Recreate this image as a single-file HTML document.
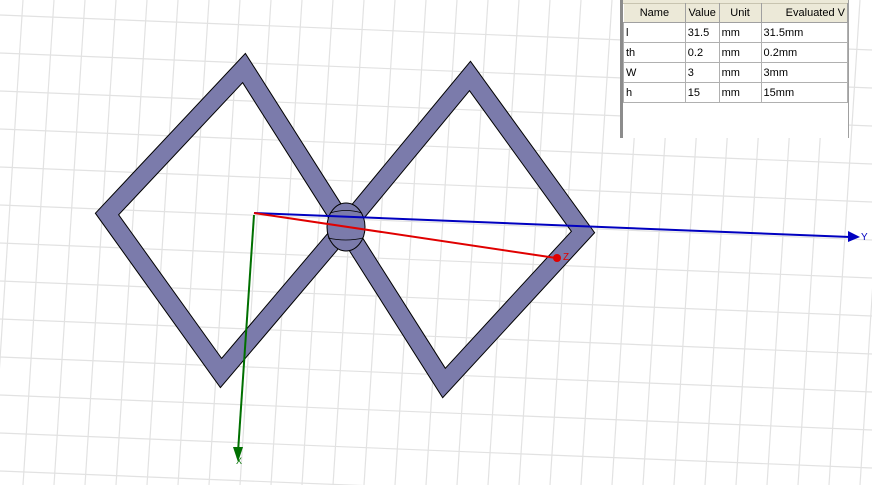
<!DOCTYPE html>
<html><head><meta charset="utf-8"><style>
html,body{margin:0;padding:0;background:#fff;width:872px;height:485px;overflow:hidden;font-family:"Liberation Sans",sans-serif}
#tbl{position:absolute;left:620px;top:0;width:229px;height:138px;background:#fff;border-left:3px solid #8c8c8c;border-right:1px solid #a0a0a0;box-sizing:border-box}
#tbl .top{position:absolute;left:0;top:0;width:100%;height:3px;background:#ece9d8}
table{position:absolute;left:0;top:3px;border-collapse:collapse;font-size:11px;color:#000}
td,th{height:19px;padding:0 2px;border:1px solid #b0b0b0;white-space:nowrap;overflow:hidden;font-weight:normal}
th{background:#ece9d8;height:18px;border-color:#c8c4b0 #a0a0a0 #a0a0a0 #fff}
</style></head><body>
<svg width="872" height="485" style="position:absolute;left:0;top:0">
<g stroke="#e2e2e2" stroke-width="1.2">
<line x1="23" y1="0" x2="-8" y2="485"/><line x1="54" y1="0" x2="23" y2="485"/><line x1="85" y1="0" x2="54" y2="485"/><line x1="116" y1="0" x2="85" y2="485"/><line x1="147" y1="0" x2="116" y2="485"/><line x1="178" y1="0" x2="147" y2="485"/><line x1="209" y1="0" x2="178" y2="485"/><line x1="240" y1="0" x2="209" y2="485"/><line x1="271" y1="0" x2="240" y2="485"/><line x1="302" y1="0" x2="271" y2="485"/><line x1="333" y1="0" x2="302" y2="485"/><line x1="364" y1="0" x2="333" y2="485"/><line x1="395" y1="0" x2="364" y2="485"/><line x1="426" y1="0" x2="395" y2="485"/><line x1="457" y1="0" x2="426" y2="485"/><line x1="488" y1="0" x2="457" y2="485"/><line x1="519" y1="0" x2="488" y2="485"/><line x1="550" y1="0" x2="519" y2="485"/><line x1="581" y1="0" x2="550" y2="485"/><line x1="612" y1="0" x2="581" y2="485"/><line x1="643" y1="0" x2="612" y2="485"/><line x1="674" y1="0" x2="643" y2="485"/><line x1="705" y1="0" x2="674" y2="485"/><line x1="736" y1="0" x2="705" y2="485"/><line x1="767" y1="0" x2="736" y2="485"/><line x1="798" y1="0" x2="767" y2="485"/><line x1="829" y1="0" x2="798" y2="485"/><line x1="860" y1="0" x2="829" y2="485"/><line x1="891" y1="0" x2="860" y2="485"/>
<line x1="0" y1="15" x2="872" y2="50"/><line x1="0" y1="53" x2="872" y2="88"/><line x1="0" y1="91" x2="872" y2="126"/><line x1="0" y1="129" x2="872" y2="164"/><line x1="0" y1="167" x2="872" y2="202"/><line x1="0" y1="205" x2="872" y2="240"/><line x1="0" y1="243" x2="872" y2="278"/><line x1="0" y1="281" x2="872" y2="316"/><line x1="0" y1="319" x2="872" y2="354"/><line x1="0" y1="357" x2="872" y2="392"/><line x1="0" y1="395" x2="872" y2="430"/><line x1="0" y1="433" x2="872" y2="468"/><line x1="0" y1="471" x2="872" y2="506"/>
</g>
<g fill="none" stroke-linejoin="miter" stroke-miterlimit="10">
<path d="M345,227 L244,68 L107,214 L221,373 Z M345,227 L470,76 L583,232 L444,383 Z" stroke="#000" stroke-width="19"/>
<path d="M345,227 L244,68 L107,214 L221,373 Z M345,227 L470,76 L583,232 L444,383 Z" stroke="#7b7bab" stroke-width="17"/>
</g>
<ellipse cx="346" cy="227" rx="19" ry="24" fill="#7b7bab" stroke="#000" stroke-width="1"/>
<path d="M330,213 Q346,208 362,213 M328,238 Q346,242 363,238" stroke="#000" fill="none" stroke-width="0.8"/>
<line x1="254" y1="213" x2="850" y2="237" stroke="#0000c0" stroke-width="2"/>
<polygon points="848,231 860,237 848,242" fill="#0000c0"/>
<text x="861" y="240" font-size="10" fill="#0000c0" font-family="Liberation Sans">Y</text>
<line x1="254" y1="213" x2="556" y2="258" stroke="#e00000" stroke-width="2"/>
<circle cx="557" cy="258" r="4" fill="#e00000"/>
<text x="563" y="260" font-size="10" fill="#e00000" font-family="Liberation Sans">Z</text>
<line x1="254" y1="215" x2="238" y2="452" stroke="#007000" stroke-width="2"/>
<polygon points="233,447 243,447 238,462" fill="#007000"/>
<text x="236" y="464" font-size="9" fill="#007000" font-family="Liberation Sans">X</text>
</svg>
<div id="tbl"><div class="top"></div>
<table>
<tr><th style="width:60px;text-align:center">Name</th><th style="width:29px;text-align:center">Value</th><th style="width:39px;text-align:center">Unit</th><th style="width:84px;text-align:right">Evaluated V</th></tr>
<tr><td>l</td><td>31.5</td><td>mm</td><td>31.5mm</td></tr>
<tr><td>th</td><td>0.2</td><td>mm</td><td>0.2mm</td></tr>
<tr><td>W</td><td>3</td><td>mm</td><td>3mm</td></tr>
<tr><td>h</td><td>15</td><td>mm</td><td>15mm</td></tr>
</table></div>
</body></html>
